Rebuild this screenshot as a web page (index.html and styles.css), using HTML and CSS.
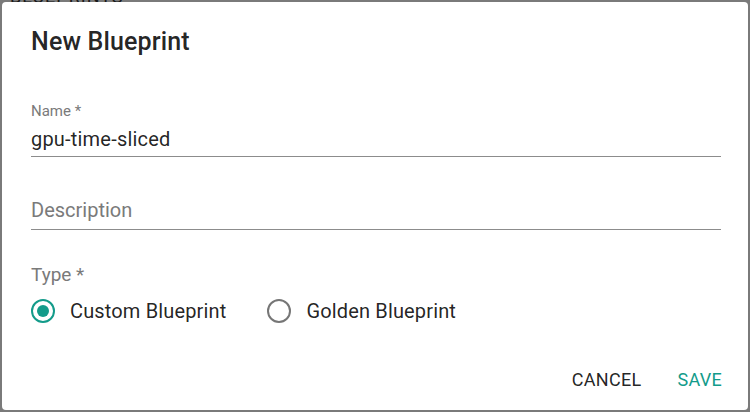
FILE: index.html
```html
<!DOCTYPE html>
<html>
<head>
<meta charset="utf-8">
<link rel="stylesheet" href="styles.css">
</head>
<body>
<div class="bg-text">BLUEPRINTS</div>
<div class="backdrop"></div>
<div class="dialog">
  <h2 class="title">New Blueprint</h2>
  <div class="field filled">
    <label class="label">Name *</label>
    <div class="value">gpu-time-sliced</div>
  </div>
  <div class="field desc">
    <div class="placeholder">Description</div>
  </div>
  <div class="group">
    <div class="group-label">Type *</div>
    <div class="radios">
      <div class="radio checked"><span class="circle"><span class="dot"></span></span><span class="rlabel">Custom Blueprint</span></div>
      <div class="radio"><span class="circle"></span><span class="rlabel">Golden Blueprint</span></div>
    </div>
  </div>
  <div class="actions">
    <button class="btn">CANCEL</button>
    <button class="btn primary">SAVE</button>
  </div>
</div>
</body>
</html>
```
FILE: styles.css
```css
html, body {
  margin: 0;
  padding: 0;
  width: 750px;
  height: 412px;
  overflow: hidden;
  background: #ffffff;
  font-family: Roboto, "Liberation Sans", sans-serif;
}
.bg-text {
  position: absolute;
  left: 10px;
  top: -14px;
  font-size: 18px;
  color: #333;
  letter-spacing: 1px;
}
.backdrop {
  position: absolute;
  inset: 0;
  background: rgba(0,0,0,0.52);
}
.dialog {
  position: absolute;
  left: 2px;
  top: 2px;
  width: 746px;
  height: 408px;
  background: #fff;
  border-radius: 4px;
  box-sizing: border-box;
  padding: 0 26px 0 29px;
  display: flex;
  flex-direction: column;
}
.title {
  margin: 24px 0 0;
  font-size: 25px;
  font-weight: 500;
  color: rgba(0,0,0,0.87);
  line-height: 32px;
  letter-spacing: 0.15px;
}
.field {
  margin-top: 44px;
  border-bottom: 1px solid #8c8c8c;
  display: flex;
  flex-direction: column;
  margin-right: 1px;
}
.label {
  font-size: 15px;
  color: #7a7a7a;
  line-height: 18px;
}
.value {
  font-size: 20px;
  color: rgba(0,0,0,0.87);
  line-height: 28px;
  padding: 5px 0 3px;
  letter-spacing: 0.2px;
}
.field.desc { margin-top: 39px; }
.placeholder {
  font-size: 20px;
  color: #7a7a7a;
  line-height: 28px;
  padding: 0 0 5px;
}
.group { margin-top: 33px; }
.group-label {
  font-size: 19px;
  color: #7a7a7a;
  line-height: 24px;
}
.radios {
  display: flex;
  margin-top: 12px;
}
.radio {
  display: flex;
  align-items: center;
  margin-right: 41px;
}
.circle {
  width: 20px;
  height: 20px;
  border: 2px solid #767676;
  border-radius: 50%;
  display: flex;
  align-items: center;
  justify-content: center;
  margin-right: 15px;
}
.checked .circle { border-color: #139b8a; }
.dot {
  width: 12px;
  height: 12px;
  border-radius: 50%;
  background: #139b8a;
}
.rlabel {
  font-size: 20px;
  color: rgba(0,0,0,0.87);
  line-height: 24px;
  letter-spacing: 0.15px;
}
.actions {
  margin-top: auto;
  margin-bottom: 18px;
  display: flex;
  justify-content: flex-end;
  gap: 36px;
}
.btn {
  background: none;
  border: 0;
  padding: 0;
  font-family: inherit;
  font-size: 18px;
  color: rgba(0,0,0,0.87);
  letter-spacing: 0.3px;
  line-height: 24px;
}
.primary { color: #139b8a; }
```
